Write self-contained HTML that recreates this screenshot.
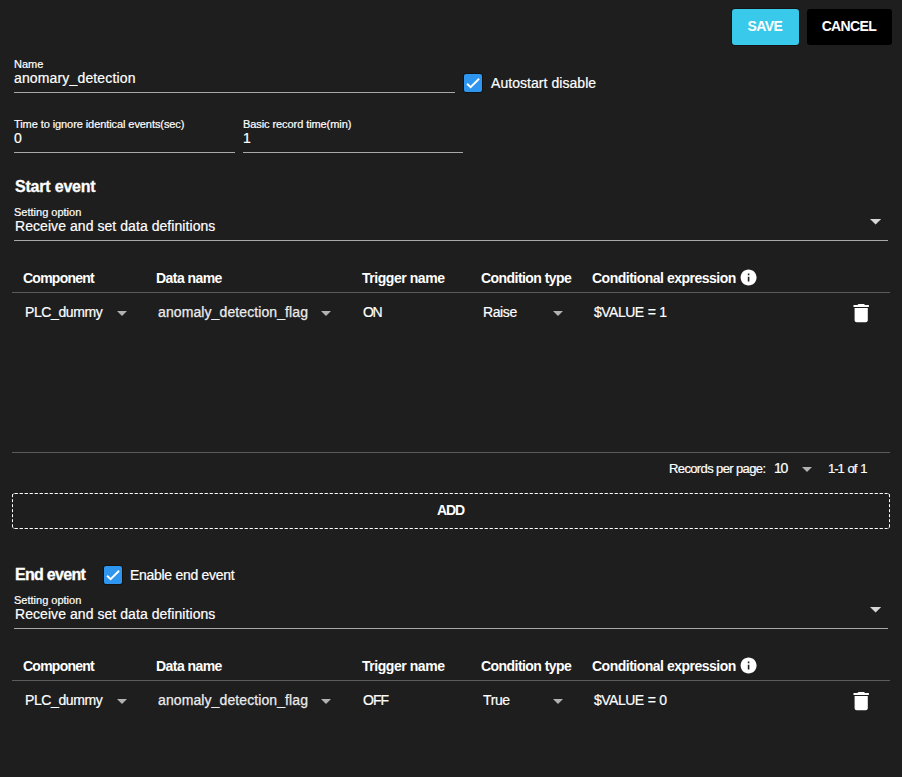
<!DOCTYPE html>
<html><head><meta charset="utf-8">
<style>
html,body{margin:0;padding:0}
body{width:902px;height:777px;background:#1e1e1e;position:relative;overflow:hidden;font-family:"Liberation Sans",sans-serif;color:#fff}
.t{position:absolute;white-space:nowrap;line-height:1}
.lbl{font-size:11px;color:#fff;-webkit-text-stroke:0.2px #fff}
.val{font-size:14px;color:#fff;-webkit-text-stroke:0.2px #fff}
.hd{font-size:14px;font-weight:700;color:#fff;letter-spacing:-0.55px}
.h2{font-size:16px;font-weight:700;color:#fff;-webkit-text-stroke:0.3px #fff}
.ln{position:absolute;height:1px;background:#a8a8a8}
.dv{position:absolute;height:1px;background:#5c5c5c}
.arr{position:absolute;width:0;height:0;border-left:5px solid transparent;border-right:5px solid transparent;border-top:5px solid #b2b2b2}
.btn{position:absolute;top:9px;height:36px;border-radius:3px;font-weight:700;font-size:14px;line-height:35px;text-align:center}
.cb{position:absolute;width:18px;height:18px;background:#2f96ef;border-radius:2px;box-shadow:0 0 0 1px rgba(0,0,0,0.35)}
.cb svg{position:absolute;left:0;top:0}
.ic{position:absolute}
</style></head><body>

<div class="btn" style="left:732px;width:67px;background:#39c9ea;box-shadow:0 0 0 1px rgba(0,0,0,0.3);letter-spacing:-0.6px;text-indent:-1.4px">SAVE</div>
<div class="btn" style="left:807px;width:85px;background:#000;letter-spacing:-0.65px;text-indent:-1.3px">CANCEL</div>

<!-- Name -->
<div class="t lbl" style="left:14px;top:59px">Name</div>
<div class="t val" style="left:14px;top:71px;letter-spacing:0.15px">anomary_detection</div>
<div class="ln" style="left:14px;top:92px;width:441px"></div>

<div class="cb" style="left:464px;top:74px"><svg width="18" height="18" viewBox="0 0 18 18"><path d="M3.1 9.8 L6.6 13.1 L15.1 4.7" fill="none" stroke="#fff" stroke-width="1.9"/></svg></div>
<div class="t val" style="left:491px;top:76px;letter-spacing:0.05px">Autostart disable</div>

<!-- Time -->
<div class="t lbl" style="left:14px;top:119px;letter-spacing:-0.08px">Time to ignore identical events(sec)</div>
<div class="t val" style="left:14px;top:131px">0</div>
<div class="ln" style="left:14px;top:152px;width:221px"></div>
<div class="t lbl" style="left:243px;top:119px;letter-spacing:-0.08px">Basic record time(min)</div>
<div class="t val" style="left:243px;top:131px">1</div>
<div class="ln" style="left:243px;top:152px;width:220px"></div>

<!-- Start event -->
<div class="t h2" style="left:15px;top:179px;letter-spacing:-0.2px">Start event</div>
<div class="t lbl" style="left:14px;top:207px">Setting option</div>
<div class="t val" style="left:15px;top:219px;letter-spacing:0.06px">Receive and set data definitions</div>
<svg class="ic" style="left:860px;top:210px" width="30" height="20"><polygon points="10,9 21.2,9 15.6,14.4" fill="#d6d6d6"/></svg>
<div class="ln" style="left:14px;top:240px;width:874px"></div>

<!-- table 1 -->
<div class="t hd" style="left:23px;top:271px;letter-spacing:-0.75px">Component</div>
<div class="t hd" style="left:156px;top:271px">Data name</div>
<div class="t hd" style="left:362px;top:271px;letter-spacing:-0.45px">Trigger name</div>
<div class="t hd" style="left:481px;top:271px">Condition type</div>
<div class="t hd" style="left:592px;top:271px;letter-spacing:-0.5px">Conditional expression</div>
<svg class="ic" style="left:739.4px;top:268.4px" width="19.2" height="19.2" viewBox="0 0 24 24"><path fill="#fff" d="M12 2C6.48 2 2 6.48 2 12s4.48 10 10 10 10-4.48 10-10S17.52 2 12 2zm1 15h-2v-6h2v6zm0-8h-2V7h2v2z"/></svg>
<div class="dv" style="left:12px;top:292px;width:878px"></div>

<div class="t val" style="left:25px;top:305px;letter-spacing:-0.4px">PLC_dummy</div>
<div class="arr" style="left:117px;top:311px"></div>
<div class="t val" style="left:158px;top:305px;letter-spacing:0.1px;color:#ececec;-webkit-text-stroke:0.25px #ececec">anomaly_detection_flag</div>
<div class="arr" style="left:321px;top:311px"></div>
<div class="t val" style="left:363px;top:305px;letter-spacing:-1.5px">ON</div>
<div class="t val" style="left:483px;top:305px;letter-spacing:-0.4px">Raise</div>
<div class="arr" style="left:553px;top:311px"></div>
<div class="t val" style="left:594px;top:305px;letter-spacing:-0.5px;word-spacing:0.6px">$VALUE = 1</div>
<svg class="ic" style="left:848.1px;top:300.9px" width="26.4" height="24.4" viewBox="0 0 24 24" preserveAspectRatio="none"><path fill="#fff" d="M6 19c0 1.1.9 2 2 2h8c1.1 0 2-.9 2-2V7H6v12zM19 4h-3.5l-1-1h-5l-1 1H5v2h14V4z"/></svg>

<div class="dv" style="left:12px;top:452px;width:878px"></div>
<div class="t" style="left:669px;top:462px;font-size:13px;letter-spacing:-0.62px;-webkit-text-stroke:0.2px #fff">Records per page:</div>
<div class="t" style="left:774px;top:461px;font-size:14px;letter-spacing:-1.2px;-webkit-text-stroke:0.2px #fff">10</div>
<div class="arr" style="left:802px;top:467px"></div>
<div class="t" style="left:828px;top:462px;font-size:13px;letter-spacing:-1.05px;word-spacing:1.4px;-webkit-text-stroke:0.2px #fff">1-1 of 1</div>

<svg style="position:absolute;left:12px;top:493px" width="878" height="36" fill="none" stroke="#fff"><path d="M0.5 2.5 Q0.5 0.5 2.5 0.5" stroke-opacity="0.5"/><path d="M875.5 0.5 Q877.5 0.5 877.5 2.5" stroke-opacity="0.5"/><path d="M0.5 33.5 Q0.5 35.5 2.5 35.5" stroke-opacity="0.5"/><path d="M877.5 33.5 Q877.5 35.5 875.5 35.5" stroke-opacity="0.5"/><line x1="2.6" y1="0.5" x2="875.5" y2="0.5" stroke-dasharray="3.3 1.7"/><line x1="2.6" y1="35.5" x2="875.5" y2="35.5" stroke-dasharray="3.3 1.7"/><line x1="0.5" y1="1.2" x2="0.5" y2="34.5" stroke-dasharray="3 2"/><line x1="877.5" y1="1.2" x2="877.5" y2="34.5" stroke-dasharray="3 2"/></svg>
<div class="t hd" style="left:437px;top:503px;letter-spacing:-1.1px">ADD</div>

<!-- End event -->
<div class="t h2" style="left:15px;top:567px;letter-spacing:-0.7px">End event</div>
<div class="cb" style="left:104px;top:566px"><svg width="18" height="18" viewBox="0 0 18 18"><path d="M3.1 9.8 L6.6 13.1 L15.1 4.7" fill="none" stroke="#fff" stroke-width="1.9"/></svg></div>
<div class="t val" style="left:130px;top:568px;letter-spacing:-0.29px">Enable end event</div>
<div class="t lbl" style="left:14px;top:595px">Setting option</div>
<div class="t val" style="left:15px;top:607px;letter-spacing:0.06px">Receive and set data definitions</div>
<svg class="ic" style="left:860px;top:598px" width="30" height="20"><polygon points="10,9 21.2,9 15.6,14.4" fill="#d6d6d6"/></svg>
<div class="ln" style="left:14px;top:628px;width:874px"></div>

<div class="t hd" style="left:23px;top:659px;letter-spacing:-0.75px">Component</div>
<div class="t hd" style="left:156px;top:659px">Data name</div>
<div class="t hd" style="left:362px;top:659px;letter-spacing:-0.45px">Trigger name</div>
<div class="t hd" style="left:481px;top:659px">Condition type</div>
<div class="t hd" style="left:592px;top:659px;letter-spacing:-0.5px">Conditional expression</div>
<svg class="ic" style="left:739.4px;top:656.4px" width="19.2" height="19.2" viewBox="0 0 24 24"><path fill="#fff" d="M12 2C6.48 2 2 6.48 2 12s4.48 10 10 10 10-4.48 10-10S17.52 2 12 2zm1 15h-2v-6h2v6zm0-8h-2V7h2v2z"/></svg>
<div class="dv" style="left:12px;top:680px;width:878px"></div>

<div class="t val" style="left:25px;top:693px;letter-spacing:-0.4px">PLC_dummy</div>
<div class="arr" style="left:117px;top:699px"></div>
<div class="t val" style="left:158px;top:693px;letter-spacing:0.1px;color:#ececec;-webkit-text-stroke:0.25px #ececec">anomaly_detection_flag</div>
<div class="arr" style="left:321px;top:699px"></div>
<div class="t val" style="left:363px;top:693px;letter-spacing:-1.0px">OFF</div>
<div class="t val" style="left:483px;top:693px;letter-spacing:-0.4px">True</div>
<div class="arr" style="left:553px;top:699px"></div>
<div class="t val" style="left:594px;top:693px;letter-spacing:-0.5px;word-spacing:0.6px">$VALUE = 0</div>
<svg class="ic" style="left:848.1px;top:688.9px" width="26.4" height="24.4" viewBox="0 0 24 24" preserveAspectRatio="none"><path fill="#fff" d="M6 19c0 1.1.9 2 2 2h8c1.1 0 2-.9 2-2V7H6v12zM19 4h-3.5l-1-1h-5l-1 1H5v2h14V4z"/></svg>

</body></html>
